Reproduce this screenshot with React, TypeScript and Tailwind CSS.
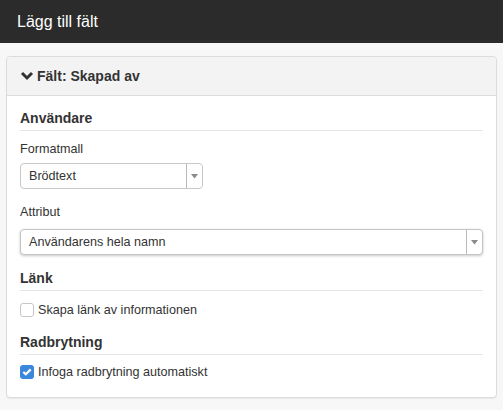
import React from "react";

function Caret() {
  return (
    <svg width="7" height="5" viewBox="0 0 7 5" className="block">
      <polygon points="0,0 7,0 3.5,4.5" fill="#8a8a8a" />
    </svg>
  );
}

function Select({ value, wide, focused }: { value: string; wide?: boolean; focused?: boolean }) {
  return (
    <div
      className={
        "flex h-[26px] items-stretch rounded-[4px] border bg-white " +
        (wide ? "w-full " : "w-[183px] ") +
        (focused
          ? "border-[#c4c4c4] shadow-[0_1px_3px_rgba(0,0,0,0.22)]"
          : "border-[#c8c8c8]")
      }
    >
      <div className="flex flex-1 items-center pl-[8px] text-[12.6px] text-[#333]">{value}</div>
      <div className="flex w-[16px] items-center justify-center border-l border-[#b8b8b8]">
        <Caret />
      </div>
    </div>
  );
}

function Heading({ children }: { children: React.ReactNode }) {
  return (
    <div className="border-b border-[#e6e6e6] pb-[3px] text-[14px] font-bold leading-[17px] text-[#333]">
      {children}
    </div>
  );
}

export default function App() {
  return (
    <div className="h-[410px] w-[503px] overflow-hidden bg-[#f7f7f7] font-['Liberation_Sans',Arial,sans-serif] text-[#333]">
      <div className="flex h-[43px] items-center bg-[#2b2b2b] px-[17px] text-[16px] text-white">
        Lägg till fält
      </div>
      <div className="px-[6px] pt-[13px]">
        <div className="rounded-[4px] border border-[#dcdcdc] bg-white shadow-[0_1px_1px_rgba(0,0,0,0.06)]">
          <div className="flex h-[39px] items-center gap-[3px] rounded-t-[4px] border-b border-[#dcdcdc] bg-[#f3f3f3] pl-[13px] text-[14px] font-bold">
            <svg width="14" height="10" viewBox="0 0 14 10" className="block">
              <polyline
                points="2,2 7,7 12,2"
                fill="none"
                stroke="#333"
                strokeWidth="3"
                strokeLinecap="butt"
                strokeLinejoin="miter"
              />
            </svg>
            <span>Fält: Skapad av</span>
          </div>
          <div className="px-[13px] pb-[16px] pt-[14px]">
            <Heading>Användare</Heading>
            <div className="mt-[9px] text-[12.6px] leading-[18px]">Formatmall</div>
            <div className="mt-[5px]">
              <Select value="Brödtext" />
            </div>
            <div className="mt-[14px] text-[12.6px] leading-[18px]">Attribut</div>
            <div className="mt-[8px]">
              <Select value="Användarens hela namn" wide focused />
            </div>
            <div className="mt-[15px]">
              <Heading>Länk</Heading>
            </div>
            <div className="mt-[10px] flex items-center gap-[4px] text-[12.6px] leading-[18px]">
              <div className="h-[14px] w-[14px] rounded-[3px] border border-[#c6c6c6] bg-white" />
              <span>Skapa länk av informationen</span>
            </div>
            <div className="mt-[15px]">
              <Heading>Radbrytning</Heading>
            </div>
            <div className="mt-[8px] flex items-center gap-[4px] text-[12.6px] leading-[18px]">
              <div className="flex h-[14px] w-[14px] items-center justify-center rounded-[3px] bg-[#3a87db]">
                <svg width="10" height="8" viewBox="0 0 10 8" className="block">
                  <polyline
                    points="1.3,4 3.8,6.3 8.7,1.4"
                    fill="none"
                    stroke="#fff"
                    strokeWidth="2.2"
                  />
                </svg>
              </div>
              <span>Infoga radbrytning automatiskt</span>
            </div>
          </div>
        </div>
      </div>
    </div>
  );
}
